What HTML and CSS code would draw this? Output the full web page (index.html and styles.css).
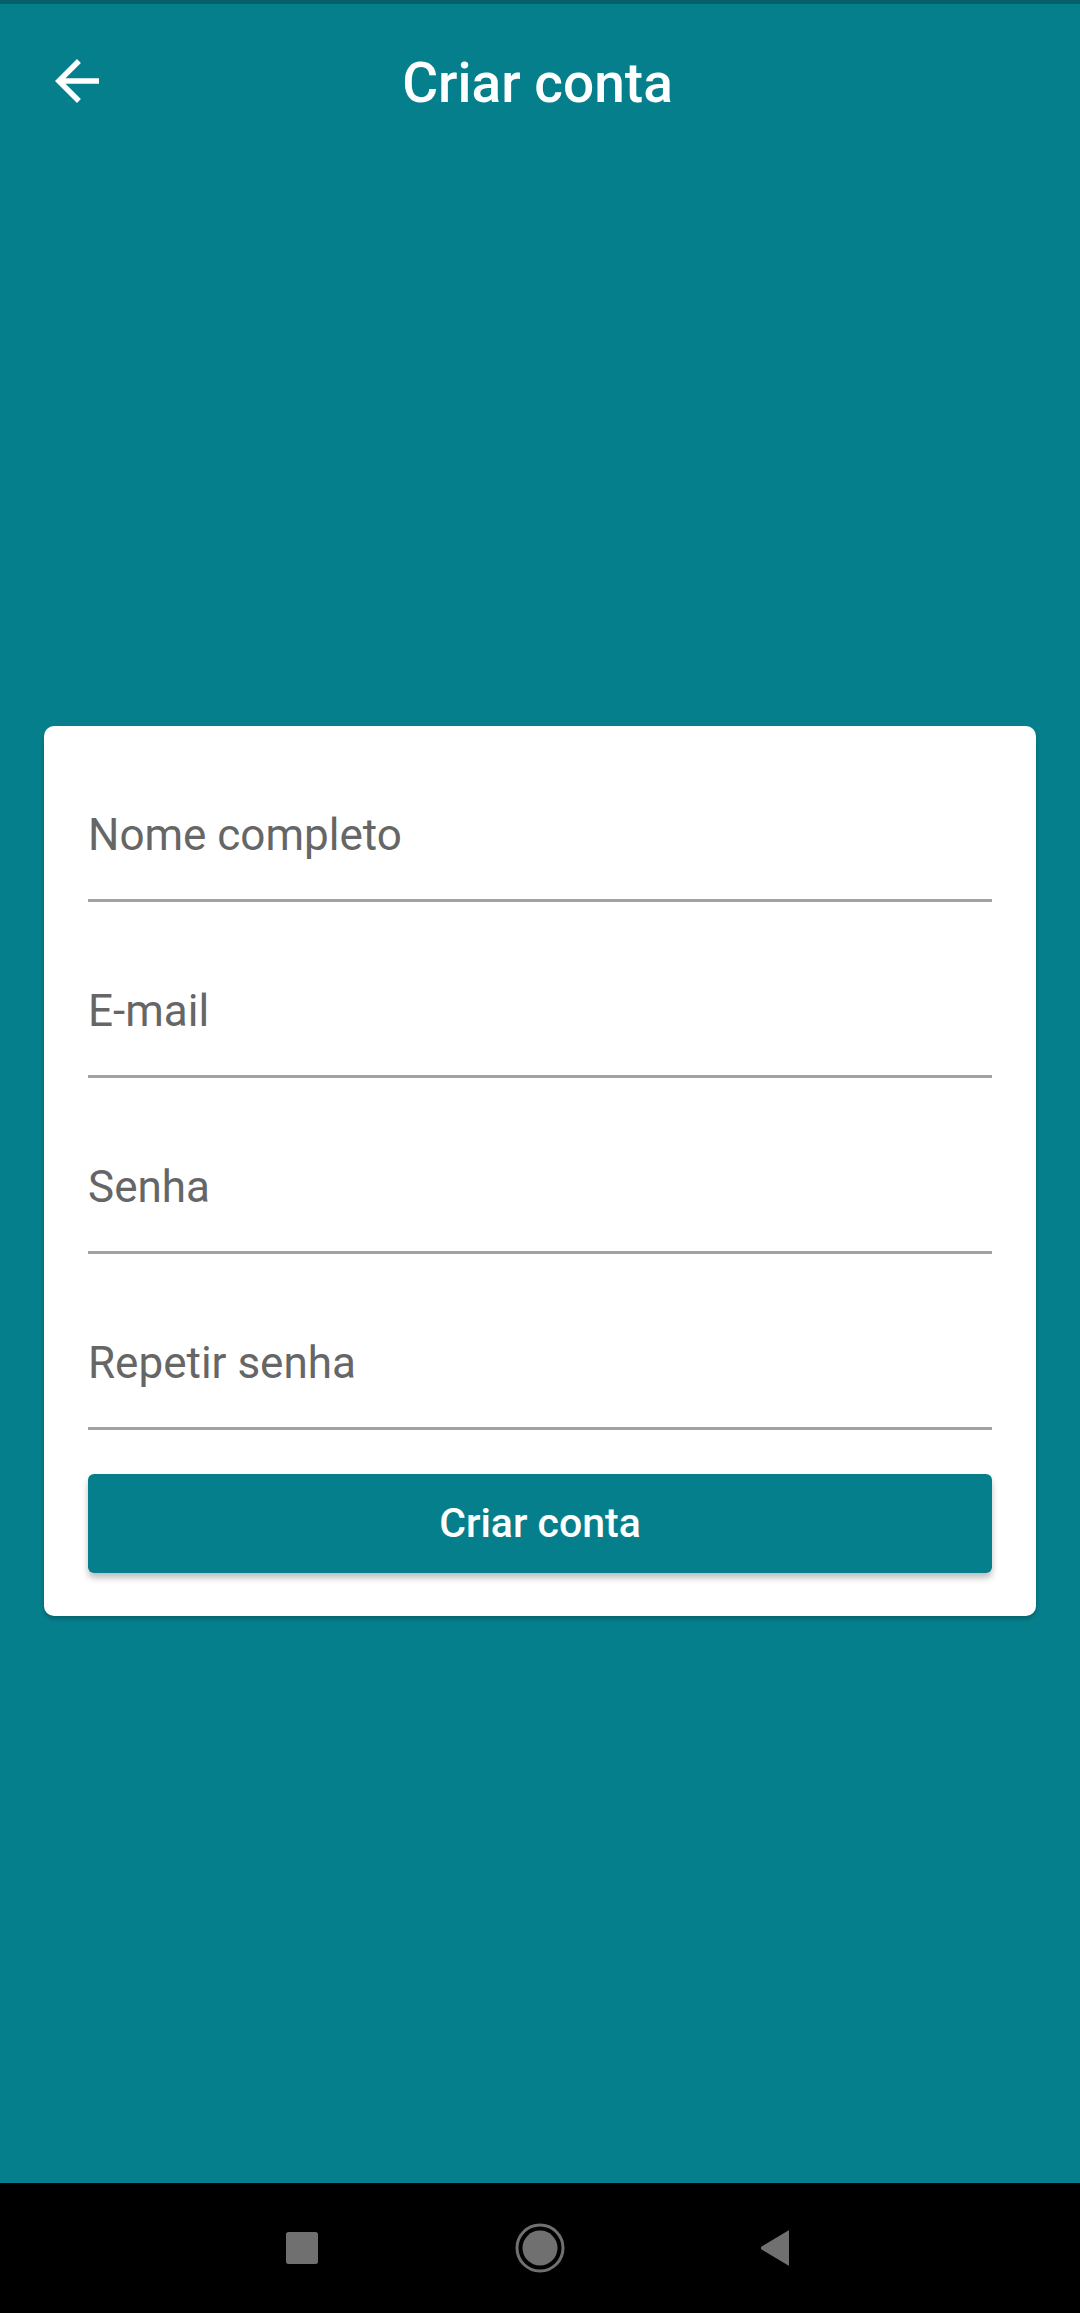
FILE: index.html
```html
<!DOCTYPE html>
<html lang="pt">
<head>
<meta charset="utf-8">
<title>Criar conta</title>
<link rel="stylesheet" href="styles.css">
</head>
<body>
<div class="screen">
  <div class="status-strip"></div>
  <header class="toolbar">
    <button class="back" aria-label="Voltar">
      <svg viewBox="0 0 24 24" width="66" height="66"><path fill="#fff" d="M20 11H7.83l5.59-5.59L12 4l-8 8 8 8 1.41-1.41L7.83 13H20v-2z"/></svg>
    </button>
    <h1 class="title">Criar conta</h1>
  </header>
  <main class="content">
    <form class="card">
      <div class="field"><span class="hint">Nome completo</span></div>
      <div class="field"><span class="hint">E-mail</span></div>
      <div class="field"><span class="hint">Senha</span></div>
      <div class="field"><span class="hint">Repetir senha</span></div>
      <button type="button" class="primary">Criar conta</button>
    </form>
  </main>
  <nav class="navbar">
    <svg class="nav-icon" width="34" height="34" viewBox="0 0 34 34"><rect x="1" y="1" width="32" height="32" rx="2.5" fill="#707070"/></svg>
    <svg class="nav-icon" width="52" height="52" viewBox="0 0 52 52"><circle cx="26" cy="26" r="23" fill="none" stroke="#707070" stroke-width="3"/><circle cx="26" cy="26" r="17.5" fill="#707070"/></svg>
    <svg class="nav-icon" width="34" height="40" viewBox="0 0 34 40"><path d="M28 3.5 L28 36.5 Q28 38.5 26.5 37 L0.5 21.5 Q-1 20 0.5 18.5 L26.5 3 Q28 1.5 28 3.5 Z" fill="#707070"/></svg>
  </nav>
</div>
</body>
</html>
```

FILE: styles.css
```css
* { box-sizing: border-box; }
html, body { margin: 0; padding: 0; }
body {
  font-family: Roboto, "Noto Sans", "Liberation Sans", sans-serif;
  background: #067f8c;
}
.screen {
  width: 1080px;
  height: 2313px;
  display: flex;
  flex-direction: column;
  background: #067f8c;
}
.status-strip {
  height: 4px;
  background: #065f69;
  flex: none;
}
.toolbar {
  height: 154px;
  flex: none;
  display: flex;
  align-items: center;
  position: relative;
}
.back {
  width: 66px;
  height: 66px;
  margin-left: 44px;
  padding: 0;
  border: 0;
  background: transparent;
  display: flex;
}
.title {
  position: absolute;
  left: 0;
  right: 0;
  top: 0;
  bottom: 0;
  margin: 0;
  display: flex;
  align-items: center;
  justify-content: center;
  font-size: 55px;
  font-weight: 500;
  color: #fff;
  pointer-events: none;
  padding-right: 5px;
  padding-top: 4px;
}
.content {
  flex: 1;
  display: flex;
  align-items: center;
  justify-content: center;
}
.card {
  width: 992px;
  background: #fff;
  border-radius: 10px;
  padding: 44px 44px 43px;
  box-shadow: 0 3px 4px rgba(0,0,0,0.22);
  display: flex;
  flex-direction: column;
}
.field {
  padding-top: 39px;
  padding-bottom: 39px;
  border-bottom: 3px solid #a2a2a2;
  height: 132px;
}
.field + .field { margin-top: 44px; }
.hint {
  display: block;
  font-size: 44px;
  line-height: 52px;
  color: #666666;
}
.primary {
  margin-top: 44px;
  height: 99px;
  border: 0;
  border-radius: 6px;
  background: #067f8c;
  color: #fff;
  font-family: Roboto, "Noto Sans", "Liberation Sans", sans-serif;
  font-size: 41px;
  font-weight: 500;
  box-shadow: 0 5px 6px rgba(0,0,0,0.25);
}
.navbar {
  height: 130px;
  flex: none;
  background: #000;
  display: flex;
  align-items: center;
  justify-content: center;
  gap: 195px;
}
```
